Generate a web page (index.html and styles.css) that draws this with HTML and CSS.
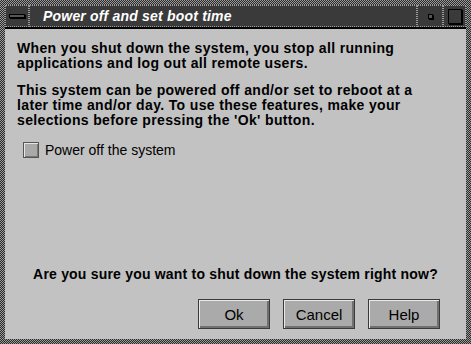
FILE: index.html
```html
<!DOCTYPE html>
<html lang="en">
<head>
    <meta charset="UTF-8">
    <title>Power off and set boot time</title>
    <link rel="stylesheet" href="styles.css">
</head>
<body>
    <div class="frame">
        <div class="titlebar">
            <div class="tb-btn menu-btn"><span class="menu-bar"></span></div>
            <div class="tb-title">Power off and set boot time</div>
            <div class="tb-btn min-btn"><span class="min-dot"></span></div>
            <div class="tb-btn max-btn"><span class="max-box"></span></div>
        </div>
        <div class="content">
            <p>When you shut down the system, you stop all running<br>applications and log out all remote users.</p>
            <p>This system can be powered off and/or set to reboot at a<br>later time and/or day. To use these features, make your<br>selections before pressing the 'Ok' button.</p>
            <label class="check-row"><span class="checkbox"></span>Power off the system</label>
            <div class="spacer"></div>
            <div class="question">Are you sure you want to shut down the system right now?</div>
            <div class="buttons">
                <button>Ok</button>
                <button>Cancel</button>
                <button>Help</button>
            </div>
        </div>
    </div>
</body>
</html>
```

FILE: styles.css
```css
body { margin: 0; padding: 0; background: #000; }
.frame {
    width: 471px;
    height: 344px;
    box-sizing: border-box;
    padding: 5px;
    background: repeating-conic-gradient(#2a2a2a 0 25%, #9a9a9a 0 50%) 0 0 / 2px 2px;
    display: flex;
    flex-direction: column;
}
.titlebar {
    display: flex;
    height: 22px;
    background: #3a3a3a;
    border-bottom: 2px solid #000;
}
.tb-btn, .tb-title {
    box-sizing: border-box;
    border: 1px dotted #9a9a9a;
    display: flex;
    align-items: center;
    justify-content: center;
}
.menu-btn { width: 24px; }
.menu-bar {
    width: 14px;
    height: 2px;
    background: #555;
    border: 1px solid #000;
    box-shadow: 1px 1px 0 #000;
}
.tb-title {
    flex: 1;
    justify-content: flex-start;
    padding-left: 13px;
    color: #fff;
    font-family: "Liberation Sans", Arial, sans-serif;
    font-style: italic;
    font-weight: bold;
    font-size: 14px;
    letter-spacing: 0.2px;
}
.min-btn { width: 26px; }
.min-dot {
    width: 3px;
    height: 3px;
    border: 1px solid #000;
    background: #555;
    box-shadow: 1px 1px 0 #000;
}
.max-btn { width: 23px; }
.max-box {
    width: 12px;
    height: 13px;
    border: 1px solid #000;
    background: #3a3a3a;
    box-shadow: 1px 1px 0 #000;
}
.content {
    flex: 1;
    background: #c2c2c2;
    padding: 12px 26px 10px 12px;
    display: flex;
    flex-direction: column;
    font-family: "Liberation Sans", Arial, sans-serif;
    font-size: 14px;
    line-height: 15px;
    color: #000;
}
.content p {
    margin: 0 0 12px;
    font-weight: bold;
    letter-spacing: 0.35px;
}
.check-row {
    display: flex;
    align-items: center;
    gap: 6px;
    margin: 2px 0 0 6px;
}
.checkbox {
    width: 14px;
    height: 14px;
    background: #a9a9a9;
    border: 1px solid #555;
    box-shadow: inset 1px 1px 0 #e6e6e6, inset -1px -1px 0 #777;
}
.spacer { flex: 1; }
.question {
    font-weight: bold;
    letter-spacing: 0.2px;
    text-align: center;
    margin: 0 -14px 17px 0;
}
.buttons {
    display: flex;
    justify-content: flex-end;
    gap: 13px;
}
.buttons button {
    width: 72px;
    height: 30px;
    background: #aaaaaa;
    border: 1px solid #3a3a3a;
    box-shadow: inset 1px 1px 0 #e8e8e8, inset -2px -2px 0 #707070;
    font-family: "Liberation Sans", Arial, sans-serif;
    font-size: 15px;
    color: #000;
    padding: 0;
}
```
